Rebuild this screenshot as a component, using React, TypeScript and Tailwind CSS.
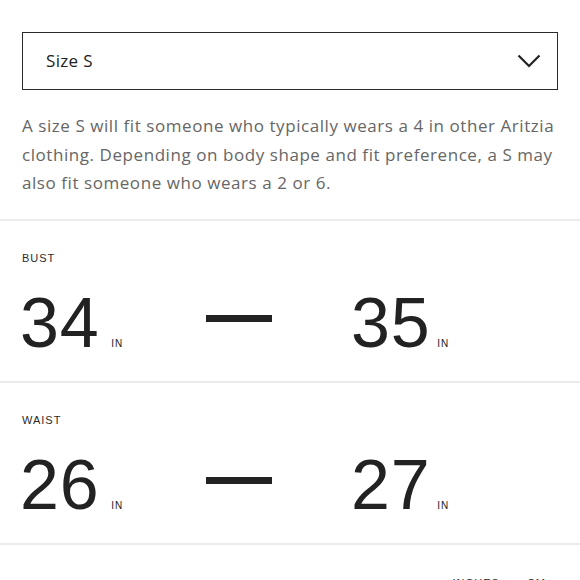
function Measure({ label, from, to }: { label: string; from: number; to: number }) {
  return (
    <div className="px-[22px] pt-[30px] h-[160px]">
      <div className="text-[11px] leading-[14px] tracking-[0.09em] text-[#2a2a2a] font-['Liberation_Sans',sans-serif]">
        {label}
      </div>
      <div className="mt-[24px] flex items-center h-[68px] font-['Liberation_Sans',sans-serif] text-[#222]">
        <div className="w-[184px] flex items-baseline">
          <span className="text-[70px] leading-[68px] tracking-[0.01em] -ml-[2px]">{from}</span>
          <span className="ml-[12px] text-[10px] tracking-[0.1em]">IN</span>
        </div>
        <div className="w-[66px] h-[7px] mb-[8px] bg-[#222]" />
        <div className="ml-[79px] flex items-baseline">
          <span className="text-[70px] leading-[68px] tracking-[0.01em]">{to}</span>
          <span className="ml-[7px] text-[10px] tracking-[0.1em]">IN</span>
        </div>
      </div>
    </div>
  );
}

export default function App() {
  return (
    <div className="w-[580px] h-[580px] overflow-hidden bg-white font-['Open_Sans',sans-serif]">
      <div className="pt-[32px] px-[22px]">
        <div className="h-[58px] border-[1.5px] border-[#2b2b2b] flex items-center justify-between pl-[23px] pr-[16px]">
          <span className="text-[17px] tracking-[0.02em] text-[#222]">Size S</span>
          <svg width="24" height="14" viewBox="0 0 24 14" fill="none">
            <polyline points="1.5,1.5 12,12 22.5,1.5" stroke="#222" strokeWidth="2.2" />
          </svg>
        </div>
        <p className="mt-[22px] mb-[21px] text-[17px] leading-[28.5px] tracking-[0.033em] text-[#666]">
          A size S will fit someone who typically wears a 4 in other Aritzia clothing. Depending on body shape and fit
          preference, a S may also fit someone who wears a 2 or 6.
        </p>
      </div>
      <div className="h-[2px] bg-[#ebebeb]" />
      <Measure label="BUST" from={34} to={35} />
      <div className="h-[2px] bg-[#ebebeb]" />
      <Measure label="WAIST" from={26} to={27} />
      <div className="h-[2px] bg-[#ebebeb]" />
      <div className="flex justify-end gap-[27px] pr-[34px] pt-[31px] text-[11px] leading-[14px] tracking-[0.09em] text-[#2a2a2a] font-['Liberation_Sans',sans-serif]">
        <span>INCHES</span>
        <span>CM</span>
      </div>
    </div>
  );
}
